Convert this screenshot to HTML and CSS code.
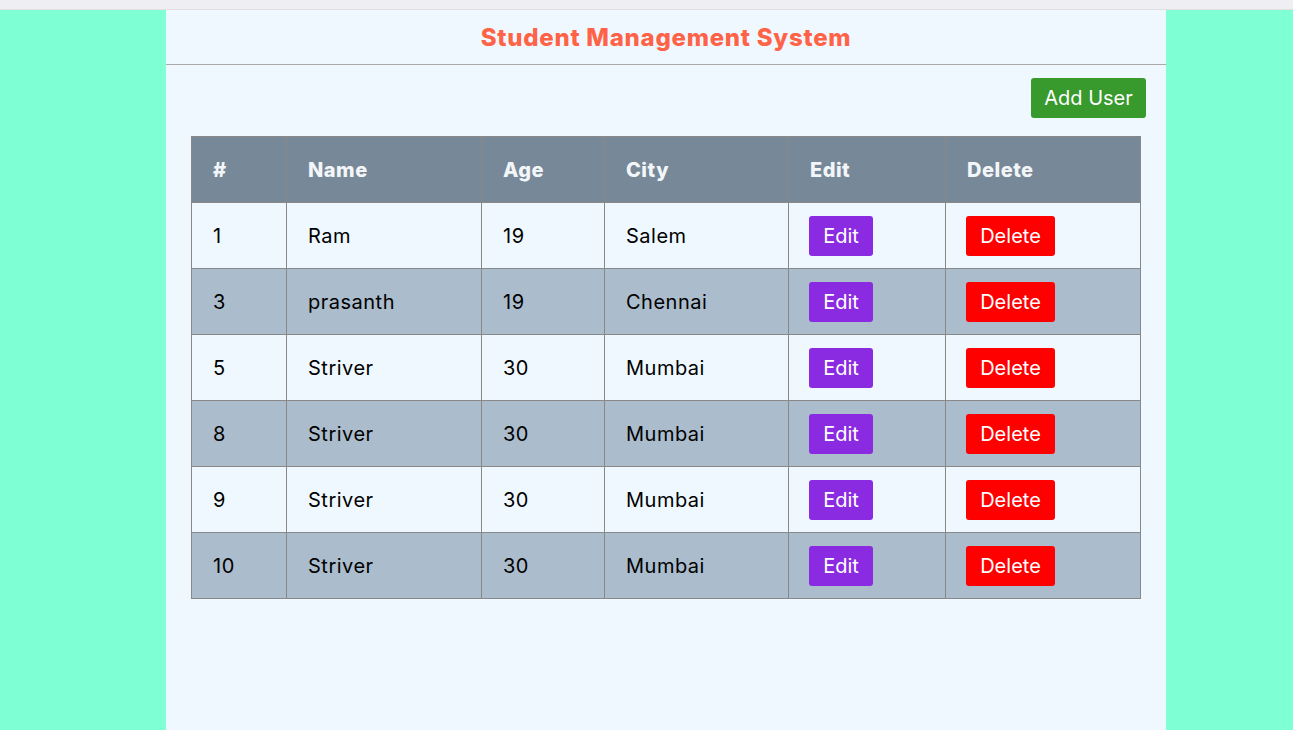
FILE: index.html
```html
<!DOCTYPE html>
<html lang="en">
<head>
<meta charset="utf-8">
<title>Student Management System</title>
<link rel="stylesheet" href="styles.css">
</head>
<body>
<div class="chrome"></div>
<main class="app">
  <header class="app-header">
    <h1 class="title">Student Management System</h1>
  </header>
  <div class="toolbar">
    <button class="btn btn-add">Add User</button>
  </div>
  <table class="students">
    <colgroup>
      <col class="c1"><col class="c2"><col class="c3"><col class="c4"><col class="c5"><col class="c6">
    </colgroup>
    <thead>
      <tr><th>#</th><th>Name</th><th>Age</th><th>City</th><th>Edit</th><th>Delete</th></tr>
    </thead>
    <tbody>
      <tr><td>1</td><td>Ram</td><td>19</td><td>Salem</td><td class="action"><button class="btn btn-edit">Edit</button></td><td class="action"><button class="btn btn-del">Delete</button></td></tr>
      <tr><td>3</td><td>prasanth</td><td>19</td><td>Chennai</td><td class="action"><button class="btn btn-edit">Edit</button></td><td class="action"><button class="btn btn-del">Delete</button></td></tr>
      <tr><td>5</td><td>Striver</td><td>30</td><td>Mumbai</td><td class="action"><button class="btn btn-edit">Edit</button></td><td class="action"><button class="btn btn-del">Delete</button></td></tr>
      <tr><td>8</td><td>Striver</td><td>30</td><td>Mumbai</td><td class="action"><button class="btn btn-edit">Edit</button></td><td class="action"><button class="btn btn-del">Delete</button></td></tr>
      <tr><td>9</td><td>Striver</td><td>30</td><td>Mumbai</td><td class="action"><button class="btn btn-edit">Edit</button></td><td class="action"><button class="btn btn-del">Delete</button></td></tr>
      <tr><td>10</td><td>Striver</td><td>30</td><td>Mumbai</td><td class="action"><button class="btn btn-edit">Edit</button></td><td class="action"><button class="btn btn-del">Delete</button></td></tr>
    </tbody>
  </table>
</main>
</body>
</html>
```
FILE: styles.css
```css
html, body {
  margin: 0;
  padding: 0;
  height: 100%;
}
body {
  background: #7fffd4;
  font-family: Inter, "Open Sans", sans-serif;
  display: flex;
  flex-direction: column;
  overflow: hidden;
}
.chrome {
  height: 9px;
  background: #efeff3;
  border-bottom: 1px solid #e6dde2;
  flex: none;
}
.app {
  width: 1000px;
  margin-left: 166px;
  background: #f0f8ff;
  flex: 1;
  display: flex;
  flex-direction: column;
}
.app-header {
  height: 54px;
  border-bottom: 1px solid #a9a9a9;
  display: flex;
  align-items: center;
  justify-content: center;
}
.title {
  margin: 0;
  color: #ff6347;
  font-size: 24px;
  font-weight: 800;
  letter-spacing: 0.75px;
}
.toolbar {
  display: flex;
  justify-content: flex-end;
  padding: 13px 20px 18px 0;
}
.btn {
  font-family: Inter, "Open Sans", sans-serif;
  font-size: 20px;
  color: #fff;
  border: none;
  border-radius: 3px;
  height: 40px;
  padding: 0;
  cursor: pointer;
}
.btn-add {
  background: #389a2c;
  width: 115px;
}
.btn-edit {
  background: #8a2be2;
  width: 64px;
}
.btn-del {
  background: #ff0000;
  width: 89px;
}
.students {
  margin-left: 25px;
  width: 949px;
  border-collapse: collapse;
  table-layout: fixed;
  font-size: 20px;
  color: #000;
}
.c1 { width: 95px; }
.c2 { width: 195px; }
.c3 { width: 123px; }
.c4 { width: 184px; }
.c5 { width: 157px; }
.c6 { width: 195px; }
.students th,
.students td {
  border: 1px solid #888;
  text-align: left;
  padding: 0 0 0 21px;
  vertical-align: middle;
}
.students th {
  background: #778899;
  color: #f3f6f8;
  font-weight: 800;
  letter-spacing: 0.5px;
  height: 65px;
}
.students td {
  height: 65px;
  letter-spacing: 0.5px;
}
.students td.action {
  padding-left: 20px;
  letter-spacing: 0;
}
.students tbody tr:nth-child(odd) td {
  background: #f0f8ff;
}
.students tbody tr:nth-child(even) td {
  background: #abbccd;
}
```
